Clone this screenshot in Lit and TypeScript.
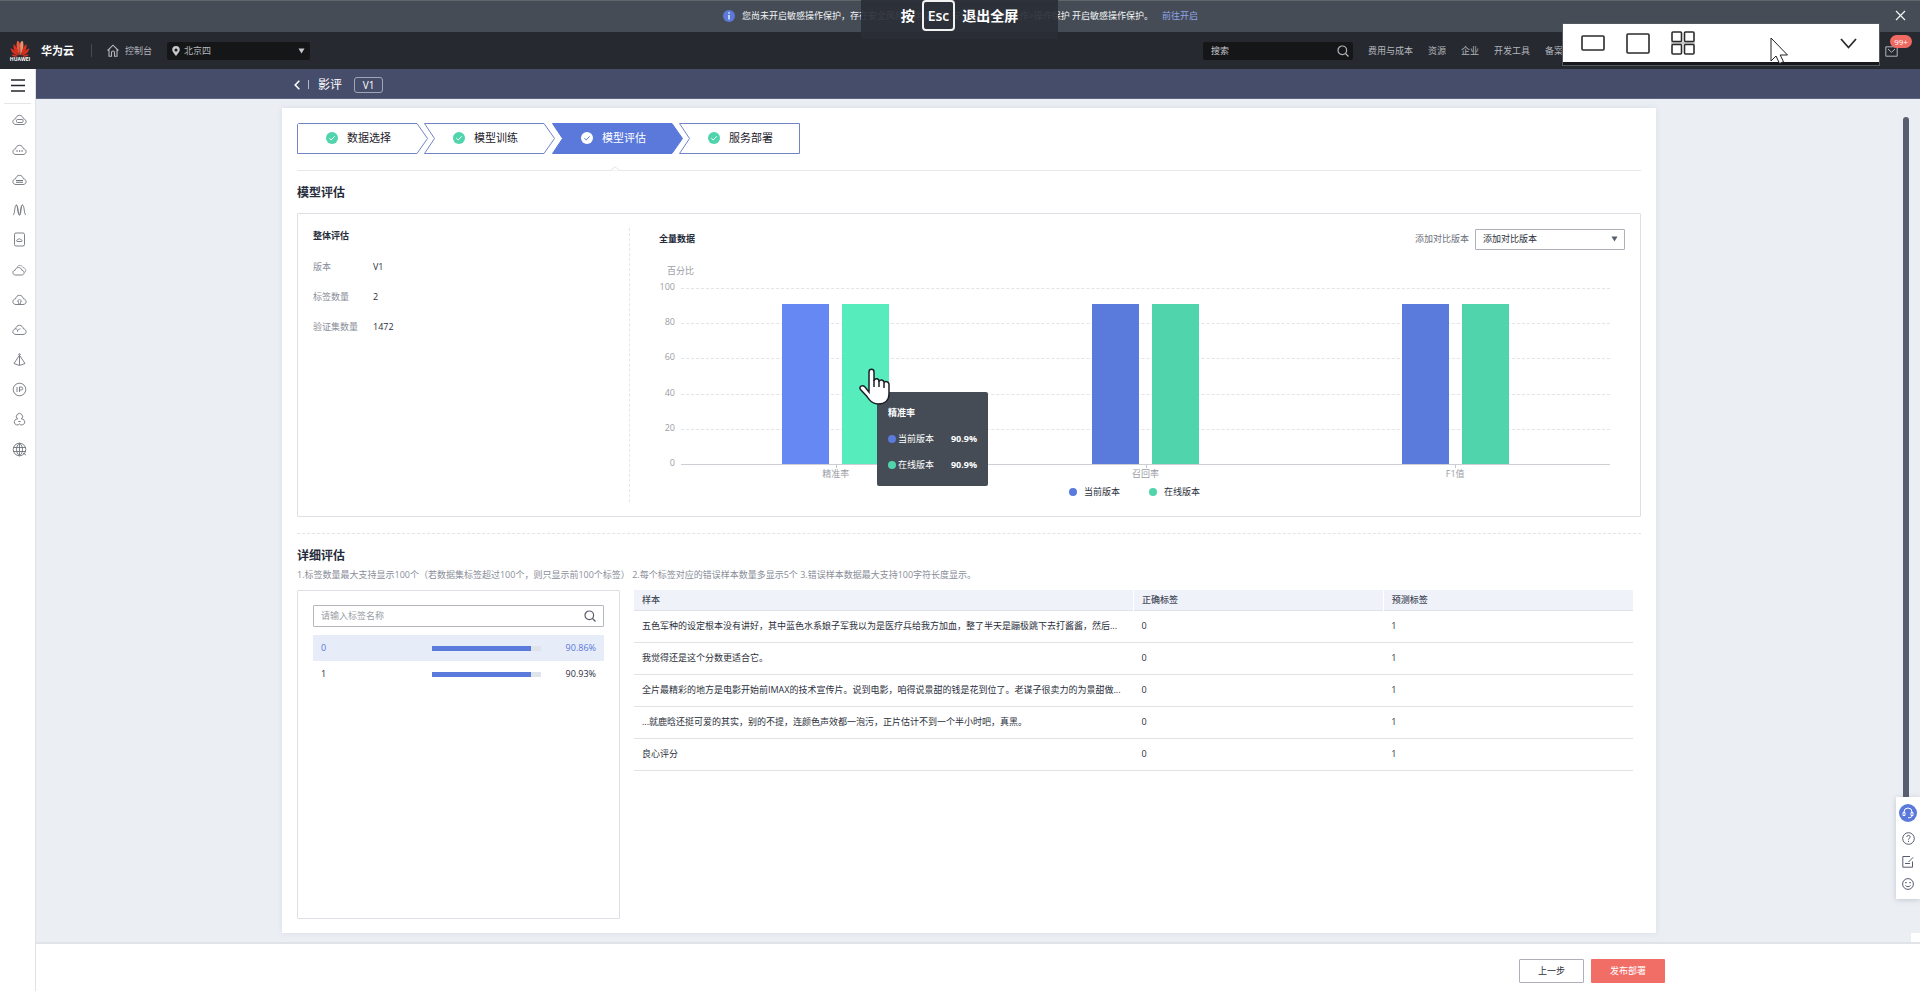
import { LitElement, html, css, svg } from "lit";
import { customElement, state } from "lit/decorators.js";
import { classMap } from "lit/directives/class-map.js";

const cloud = svg`<path d="M4 12.500C2.100 12.500.9 11.300.9 9.700c0-1.500 1.100-2.700 2.700-2.900C4 4.700 5.600 3.300 7.500 3.300s3.500 1.400 3.900 3.500c1.600.2 2.700 1.400 2.700 2.900 0 1.600-1.200 2.800-3.100 2.800z"/>`;

const sideIcons = [
  { name: "云服务器", art: svg`${cloud}<rect x="4.500" y="7.500" width="6.500" height="3" rx="1"/>` },
  { name: "云容器", art: svg`${cloud}<path d="M4.500 9h1.200M7 9h1.200M9.500 9h1.200" stroke-width="1.400"/>` },
  { name: "裸金属", art: svg`${cloud}<path d="M4 8.500h7M4 10.300h7" stroke-width="1.100"/>` },
  { name: "弹性伸缩", art: svg`<path d="M1 13C3 13 2.500 3 4.300 3S5.500 13 7.500 13 8.500 3 10.500 3 12 13 14 13M4.300 3c2 0 1.500 10 3.200 10M10.500 3c-2 0-2 10-3 10"/>` },
  { name: "云硬盘", art: svg`<rect x="2.500" y="1" width="10" height="13" rx="1.500"/><path d="M5 9.500c-1-1 0-2 .8-1.800.5-1.300 2.500-1.300 3 0 1 0 1.500 1 .9 1.800z"/>` },
  { name: "对象存储", art: svg`<path d="M3.500 13C1.800 13 .9 12 .9 10.600c0-1.300 1-2.200 2.200-2.300C3.500 6.500 5 5.500 6.500 5.500s3 1 3.400 2.800c1.300.1 2.200 1 2.200 2.300 0 1.400-1 2.400-2.600 2.400z"/><path d="M5 5.200C6 3 9.500 2.500 11 5.500c2.500.5 3.800 2.800 1.800 5" stroke-opacity=".7"/>` },
  { name: "上传", art: svg`${cloud}<path d="M7.500 7 5.300 9.300h1.200v2.500h2V9.300h1.200z" stroke-width=".7"/>` },
  { name: "虚拟私有云", art: svg`${cloud}<path d="M3.500 6.800c2 .3 2.500 1.500 2 3M5.500 8.800C6 7.500 7 7 8.500 6.800" stroke-width=".8"/>` },
  { name: "负载均衡", art: svg`<path d="M7.500 3v10M7 4 2 11.500 7.500 13.500 13 11.500 8 4"/><circle cx="7.500" cy="2.500" r=".8"/>` },
  { name: "弹性公网", art: svg`<circle cx="7.500" cy="7.500" r="6.300"/><path d="M5 5v5M7.500 10V5h1.700a1.500 1.500 0 0 1 0 3H7.500"/>` },
  { name: "区块链", art: svg`<path d="M5.600 7A3.100 3.100 0 1 1 9.400 7M5.600 7A3 3 0 1 0 7.500 12a3 3 0 1 0 1.900-5M6.300 9.500h2.400"/>` },
  { name: "域名", art: svg`<circle cx="7.500" cy="7.500" r="6.300"/><path d="M1.200 5.500h12.600M1.200 9.500h12.600M7.500 1.200v12.600M7.500 1.200c-4 3-4 9.600 0 12.600M7.500 1.200c4 3 4 9.600 0 12.600M11 11l3 2"/>` },
];

const steps = ["数据选择", "模型训练", "模型评估", "服务部署"];
const metrics = [
  { name: "精准率", current: 90.9, online: 90.9 },
  { name: "召回率", current: 90.9, online: 90.9 },
  { name: "F1值", current: 90.9, online: 90.9 },
];
const labels = [
  { name: "0", score: 90.86 },
  { name: "1", score: 90.93 },
];
const samples = [
  "五色军种的设定根本没有讲好，其中蓝色水系娘子军我以为是医疗兵给我方加血，整了半天是蹦极跳下去打酱酱，然后...",
  "我觉得还是这个分数更适合它。",
  "全片最精彩的地方是电影开始前IMAX的技术宣传片。说到电影，咱得说景甜的钱是花到位了。老谋子很卖力的为景甜做...",
  "...就鹿晗还挺可爱的其实，别的不提，连颜色声效都一泡污，正片估计不到一个半小时吧，真黑。",
  "良心评分",
];

@customElement("app-root")
export class AppRoot extends LitElement {
  @state() private selected = "0";
  @state() private hovered = 0;

  static styles = css`
    :host {
      display: flex;
      flex-direction: column;
      min-height: 100vh;
      position: relative;
      font: 9px/14px "Open Sans", "Noto Sans CJK SC", sans-serif;
      color: #2b303b;
      background: #ebeef3;
    }
    * { box-sizing: border-box; }
    button, input, select { font: inherit; color: inherit; margin: 0; padding: 0; border: 0; background: none; border-radius: 0; outline: 0; }
    button { cursor: pointer; }
    a { color: inherit; text-decoration: none; }
    svg { display: block; fill: none; stroke: currentColor; flex: none; }
    h1, h2, h3, p, ul, ol, dl, dd { margin: 0; padding: 0; list-style: none; }

    .notice { position: relative; display: flex; align-items: center; height: 32px; padding: 0 14px 2px 723px; background: #454c55; border-top: 1px solid #62666a; color: #f2f4f6; white-space: nowrap; }
    .notice a { color: #8fa5ec; margin-left: 9px; }
    .notice .info { margin-right: 7px; }
    .notice .close { margin-left: auto; }
    .esc { position: absolute; left: 861px; top: -1px; width: 197px; height: 39px; display: flex; align-items: flex-start; justify-content: center; gap: 7px; background: rgba(42, 46, 54, 0.92); color: #fff; font-size: 14px; line-height: 31px; font-weight: 600; z-index: 2; }
    .esc kbd { font: inherit; line-height: 27px; padding: 0 4px; border: 2px solid #f2f2f2; border-radius: 4px; }

    .header { display: flex; align-items: center; height: 37px; padding: 0 7px 0 10px; background: #262930; color: #b3b6bb; }
    .logo { display: flex; flex-direction: column; align-items: center; width: 20px; color: #fff; font-size: 5px; line-height: 5px; font-weight: 700; }
    .brand { margin-left: 11px; font-size: 11px; font-weight: 700; color: #fff; }
    .bar { width: 1px; height: 13px; background: #474b52; margin: 0 15px 0 17px; }
    .console { display: flex; align-items: center; gap: 6px; }
    .region { display: flex; align-items: center; gap: 4px; width: 143px; height: 18px; margin-left: 15px; padding: 0 5px; background: #151618; border-radius: 2px; }
    .region select { appearance: none; flex: 1; }
    .find { display: flex; align-items: center; width: 150px; height: 18px; margin-left: auto; padding: 0 4px 0 8px; background: #151618; border-radius: 2px; }
    .find input { flex: 1; min-width: 0; }
    .find input::placeholder { color: #c6c8cc; }
    .links { display: flex; gap: 15px; width: 517px; margin-left: 15px; white-space: nowrap; overflow: hidden; }
    .mail { position: relative; margin: 2px 0 0; padding-right: 15px; }
    .badge { position: absolute; left: 5px; top: -11px; width: 22px; height: 13px; border-radius: 7px; background: #ee6a62; color: #fff; font-size: 8px; line-height: 13px; text-align: center; }

    .viewer { position: absolute; right: 40px; top: 23px; width: 318px; height: 43px; padding: 0 22px 3px 18px; display: flex; align-items: center; gap: 21px; background: #fff; border: 1px solid #55585c; box-shadow: inset 0 -3px #17191c; color: #2b2b2b; z-index: 3; }
    .viewer .more { margin-left: auto; }
    .arrow { position: absolute; left: 1770px; top: 37px; z-index: 4; }

    .frame { display: flex; flex: 1; }
    .side { width: 36px; background: #fff; border-right: 1px solid #dfe2e6; display: flex; flex-direction: column; align-items: center; color: #6f747c; }
    .side .menu { height: 35px; width: 27px; padding-bottom: 2px; border-bottom: 1px solid #e4e6e9; color: #23262c; display: grid; place-items: center; }
    .side ul { display: flex; flex-direction: column; gap: 15px; padding-top: 8px; }
    .side li { height: 15px; padding-left: 3px; }
    .side li a { display: block; }
    .main { flex: 1; min-width: 0; display: flex; flex-direction: column; }
    .title { height: 30px; background: #464d6b; border-bottom: 1px solid #5d6380; color: #fff; display: flex; align-items: center; padding: 2px 0 0 258px; }
    .title i { width: 1px; height: 9px; margin: 0 9px 0 8px; background: #b4b8c8; }
    .title h1 { font-size: 12px; font-weight: 400; line-height: 16px; }
    .title .ver { margin-left: 12px; width: 29px; height: 16px; border: 1px solid #a0a5b8; border-radius: 3px; font-size: 10px; line-height: 14px; text-align: center; }

    .content { flex: 1; display: flex; position: relative; padding: 9px 18px 9px 0; }
    .card { flex: 1; max-width: 1374px; margin: 0 auto; padding: 15px 15px 14px; background: #fff; box-shadow: 0 0 5px rgba(190, 200, 225, 0.45); display: flex; flex-direction: column; }
    .thumb { position: absolute; right: 11px; top: 18px; bottom: 100px; width: 6px; border-radius: 3px; background: #5a5f6f; }
    .corner { position: absolute; right: 0; bottom: 0; width: 9px; height: 9px; background: #fff; }

    .steps { display: flex; gap: 0; }
    .steps li { position: relative; width: 131px; height: 31px; margin-right: -4px; padding: 0 0 2px 29px; display: flex; align-items: center; gap: 9px; font-size: 11px; color: #1e222a; }
    .steps li:nth-child(even) { width: 132px; }
    .steps li > * { position: relative; }
    .steps li .shape { position: absolute; inset: 0; stroke: #7084c6; fill: #fff; }
    .steps .active { color: #fff; }
    .steps .active .shape { fill: #5a79db; stroke: #5a79db; }
    .steps .tick circle { fill: #50d4ab; stroke: none; }
    .steps .tick { color: #fff; }
    .steps .active .tick circle { fill: #fff; }
    .steps .active .tick { color: #5a79db; }

    .rule { margin-top: 16px; height: 1px; background: #e6e8eb; padding-left: 312px; }
    .rule svg { position: relative; top: -4px; }
    h2 { margin: 12px 0 0; font-size: 12px; line-height: 20px; font-weight: 600; color: #252b3a; }
    .box { border: 1px solid #dcdfe3; border-radius: 1px; }
    .overall { display: flex; margin-top: 10px; padding: 14px 15px; }
    .summary { width: 317px; padding-top: 1px; border-right: 1px dashed #e4e6e9; }
    h3 { font-size: 9px; line-height: 14px; font-weight: 700; color: #252b3a; }
    .summary dl { display: grid; grid-template-columns: 60px 1fr; row-gap: 16px; margin-top: 17px; }
    dt, .note { color: #8a8e99; }
    .report { flex: 1; min-width: 0; padding: 0 0 3px 29px; }
    .top { display: flex; align-items: center; height: 22px; }
    .top label { margin-left: auto; margin-right: 6px; color: #6c707a; }
    .pick { display: flex; align-items: center; width: 150px; height: 21px; padding: 0 6px 0 7px; border: 1px solid #adb0b8; border-radius: 1px; }
    .pick select { appearance: none; flex: 1; }
    .unit { margin: 14px 0 0 8px; color: #9a9da5; }
    .chart { display: grid; grid-template-columns: 16px 1fr; column-gap: 6px; margin: 2px 15px 0 0; }
    .scale { display: flex; flex-direction: column; justify-content: space-between; height: 190px; color: #9a9da5; text-align: right; }
    .plot { position: relative; margin-top: 8px; display: grid; height: 177px; }
    .lines, .bands { grid-area: 1 / 1; display: flex; }
    .lines { flex-direction: column; justify-content: space-between; }
    .lines i { border-top: 1px dashed #e2e4e8; }
    .lines i:last-child { border-top: 1px solid #ccd0d4; }
    .bands { position: relative; }
    .band { flex: 1; position: relative; display: flex; justify-content: center; align-items: flex-end; gap: 13px; padding-bottom: 1px; }
    .col { width: 47px; }
    .current { background: #5a7adc; }
    .online { background: #50d4ab; }
    .hot .current { background: #6588f3; }
    .hot .online { background: #57ecbc; }
    .band::after { content: ""; position: absolute; left: 50%; top: 100%; width: 1px; height: 3px; background: #c0c4c8; }
    .names { grid-column: 2; display: flex; margin-top: -3px; color: #9a9da5; text-align: center; }
    .names span { flex: 1; }
    .legend { display: flex; justify-content: center; gap: 29px; margin: 4px 15px 0 0; }
    .key { display: flex; align-items: center; gap: 7px; }
    .dot { width: 8px; height: 8px; border-radius: 4px; }
    .tip { position: absolute; left: 21.1%; top: 104px; width: 111px; height: 94px; padding: 14px 11px; display: flex; flex-direction: column; gap: 12px; border-radius: 2px; background: #454c56; color: #fff; z-index: 1; }
    .tip div { display: flex; align-items: center; gap: 2px; }
    .tip b { margin-left: auto; }
    .hand { position: absolute; left: 19.2%; top: 80px; z-index: 2; }

    .cut { margin-top: 16px; border-top: 1px dashed #e2e4e8; }
    .note { margin-top: 2px; }
    .detail { flex: 1; display: flex; gap: 14px; margin-top: 8px; padding-right: 8px; }
    .tags { width: 323px; padding: 14px 15px; }
    .filter { display: flex; align-items: center; height: 22px; margin-bottom: 8px; padding: 0 7px; border: 1px solid #b4b7be; border-radius: 1px; color: #575d6c; }
    .filter input { flex: 1; min-width: 0; }
    .filter input::placeholder { color: #9a9da5; }
    .tag { display: grid; grid-template-columns: 111px 109px 1fr; align-items: center; width: 100%; height: 26px; padding: 0 8px; text-align: left; }
    .tag.on { background: #e6ecf8; color: #5a79db; }
    .track { height: 5px; background: #dfe3ea; }
    .fill { display: block; height: 5px; background: #5a7adc; }
    .pct { text-align: right; }
    table { flex: 1; align-self: flex-start; table-layout: fixed; border-collapse: collapse; min-width: 0; width: 100px; }
    th { height: 20px; padding: 0 8px; text-align: left; font-weight: 500; background: #f0f2f9; color: #464c59; width: 25%; }
    th:first-child { width: 50%; }
    th + th { border-left: 1px solid #fff; }
    td { height: 32px; padding: 0 8px; border-bottom: 1px solid #dfe3e6; white-space: nowrap; overflow: hidden; }
    thead tr { border-bottom: 1px solid #dfe3e6; }

    .foot { display: flex; align-items: flex-start; justify-content: flex-end; gap: 7px; height: 49px; padding: 15px 255px 0 0; background: #fff; border-top: 2px solid #e0e3e7; }
    .foot button { height: 24px; border-radius: 1px; }
    .prev { width: 65px; border: 1px solid #adb0b8; }
    .go { width: 74px; background: #f16e67; color: #fff; }

    .float { position: absolute; right: 0; bottom: 43px; width: 24px; height: 102px; padding-top: 7px; display: flex; flex-direction: column; align-items: center; gap: 10px; background: #fff; box-shadow: 0 1px 5px rgba(100, 110, 130, 0.3); color: #575d6c; }
    .float button { display: block; }
    .float .chat { width: 18px; height: 18px; border-radius: 9px; background: #5a79db; color: #fff; display: grid; place-items: center; }
  `;

  private caret(color: string) {
    return html`<svg width="7" height="6" viewBox="0 0 7 6"><path d="M.5.5h6L3.500 5.500z" fill=${color} stroke="none" /></svg>`;
  }

  private lens(size: number) {
    return html`<svg width=${size} height=${size} viewBox="0 0 12 12" stroke-width="1.200"><circle cx="5.300" cy="5.300" r="4.300" /><path d="m8.500 8.500 3 3" /></svg>`;
  }

  private step(name: string, i: number) {
    const points = i === 0 ? "1.500,.5 120,.5 130.500,15.500 120,30.500 .5,30.500 .5,1.500"
      : i === steps.length - 1 ? ".5,.5 120.500,.5 120.500,30.500 .5,30.500 10.500,15.500"
      : ".5,.5 120,.5 130.500,15.500 120,30.500 .5,30.500 10.500,15.500";
    return html`<li class=${classMap({ active: i === 2 })}>
      <svg class="shape" width="131" height="31"><polygon points=${points} /></svg>
      <svg class="tick" width="12" height="12" viewBox="0 0 12 12"><circle cx="6" cy="6" r="6" /><path d="m3.300 6.200 1.900 1.800 3.500-3.700" /></svg>
      <span>${name}</span>
    </li>`;
  }

  render() {
    return html`
      <div class="notice">
        <svg class="info" width="12" height="12" viewBox="0 0 12 12"><circle cx="6" cy="6" r="6" fill="#5a79db" stroke="none" /><path d="M6 5v4.500M6 2.300v1.500" stroke="#fff" stroke-width="1.300" /></svg>
        <span>您尚未开启敏感操作保护，存在安全风险，建议您去 安全设置&gt;敏感操作&gt;操作保护 开启敏感操作保护。</span>
        <a href="#protect">前往开启</a>
        <button class="close" aria-label="关闭"><svg width="11" height="11" viewBox="0 0 11 11"><path d="m1 1 9 9M10 1l-9 9" stroke-width="1.200" /></svg></button>
        <div class="esc"><span>按</span><kbd>Esc</kbd><span>退出全屏</span></div>
      </div>

      <header class="header">
        <div class="logo">
          <svg width="20" height="17" viewBox="0 0 20 17">
            <g fill="#d9301f" stroke="none">
              <path d="M9.600 15.500C7.500 11 5.500 6 7.200 1.300 9 .3 10 3 9.900 6z" fill="#ea5a40" />
              <path d="M10.400 15.500C12.500 11 14.500 6 12.800 1.300 11 .3 10 3 10.100 6z" fill="#f0916a" />
              <path d="M9 15.500C5.500 12.500 2.500 8.500 3.600 4.200 6 5 8 10 9 15.500zM11 15.500c3.500-3 6.500-7 5.400-11.300C14 5 12 10 11 15.500z" />
              <path d="M8.200 15.800C4 14.500 1 12 .6 8.300 3.500 9 6.500 12 8.200 15.800zM11.800 15.800c4.200-1.300 7.200-3.800 7.600-7.500-2.900.7-5.900 3.700-7.600 7.500z" />
              <path d="M7.800 16.500c-2.500.4-5 .2-6.300-1.800 2-.8 4.500 0 6.300 1.800zM12.200 16.500c2.500.4 5 .2 6.300-1.800-2-.8-4.500 0-6.300 1.800z" />
            </g>
          </svg>
          <span>HUAWEI</span>
        </div>
        <span class="brand">华为云</span>
        <span class="bar"></span>
        <a class="console" href="#console">
          <svg width="12" height="13" viewBox="0 0 12 13"><path d="M.6 6.500 6 1.200l5.400 5.300M2 5.500v6.700h2.500V8.500a1.500 1.500 0 0 1 3 0v3.700H10V5.500" stroke-width="1.100" /></svg>控制台</a>
        <div class="region">
          <svg width="8" height="10" viewBox="0 0 8 10"><path fill-rule="evenodd" d="M4 0a3.800 3.800 0 0 1 3.800 3.800C7.800 6 5 8.500 4 10 3 8.500.2 6 .2 3.800A3.800 3.800 0 0 1 4 0zm0 2.400a1.500 1.500 0 1 0 0 3 1.500 1.500 0 0 0 0-3z" fill="#c6c8cc" stroke="none" /></svg>
          <select aria-label="区域"><option>北京四</option></select>${this.caret("#c6c8cc")}
        </div>
        <div class="find"><input aria-label="搜索" placeholder="搜索" />${this.lens(12)}</div>
        <nav class="links">
          ${["费用与成本", "资源", "企业", "开发工具", "备案"].map((t) => html`<a href="#nav">${t}</a>`)}
        </nav>
        <a class="mail" href="#mail" aria-label="消息">
          <svg width="13" height="11" viewBox="0 0 13 11"><path d="M.8.8h11.400v9.400H.8zM3 3l3.500 3.300L10 3" /></svg>
          <span class="badge">99+</span>
        </a>
      </header>

      <div class="viewer">
        <button aria-label="宽屏"><svg width="24" height="16" stroke-width="1.600"><rect x="1" y="1" width="22" height="14" rx="1" /></svg></button>
        <button aria-label="单页"><svg width="24" height="21" stroke-width="1.600"><rect x="1" y="1" width="22" height="19" rx="1" /></svg></button>
        <button aria-label="网格"><svg width="24" height="24" stroke-width="1.600"><path d="M0 12h24" stroke="#c4c4c4" stroke-width="3" /><g fill="#fff"><rect x="1" y="1" width="9.500" height="9.500" rx="1" /><rect x="13.500" y="1" width="9.500" height="9.500" rx="1" /><rect x="1" y="13.500" width="9.500" height="9.500" rx="1" /><rect x="13.500" y="13.500" width="9.500" height="9.500" rx="1" /></g></svg></button>
        <button class="more" aria-label="展开"><svg width="17" height="11" stroke-width="1.800"><path d="m1 1 7.500 8.500L16 1" /></svg></button>
      </div>
      <svg class="arrow" width="19" height="28" viewBox="0 0 19 28"><path d="M1 1v23l5-5 3.500 7.500 4-1.800L10.200 18H17.500z" fill="#fff" stroke="#222" /></svg>

      <div class="frame">
        <aside class="side">
          <button class="menu" aria-label="菜单"><svg width="14" height="13"><path d="M0 1h14M0 6.500h14M0 12h14" stroke-width="1.700" /></svg></button>
          <ul>${sideIcons.map((s) => html`<li><a href="#service" aria-label=${s.name}><svg width="15" height="15" viewBox="0 0 15 15" stroke-width=".9">${s.art}</svg></a></li>`)}</ul>
        </aside>

        <div class="main">
          <div class="title">
            <button aria-label="返回"><svg width="6" height="10" viewBox="0 0 6 10"><path d="M5.300.7 1.200 5l4.100 4.300" stroke-width="1.600" /></svg></button>
            <i></i><h1>影评</h1><span class="ver">V1</span>
          </div>

          <div class="content">
            <main class="card">
              <ol class="steps">${steps.map((s, i) => this.step(s, i))}</ol>
              <div class="rule"><svg width="12" height="6" viewBox="0 0 12 6"><path d="M1.500 4.500 6 .8l4.500 3.700" fill="#fff" stroke="#e0e3e6" /></svg></div>

              <h2>模型评估</h2>
              <section class="box overall">
                <div class="summary">
                  <h3>整体评估</h3>
                  <dl><dt>版本</dt><dd>V1</dd><dt>标签数量</dt><dd>2</dd><dt>验证集数量</dt><dd>1472</dd></dl>
                </div>
                <div class="report">
                  <div class="top">
                    <h3>全量数据</h3>
                    <label for="compare">添加对比版本</label>
                    <span class="pick"><select id="compare"><option>添加对比版本</option></select>${this.caret("#575d6c")}</span>
                  </div>
                  <div class="unit">百分比</div>
                  <div class="chart">
                    <div class="scale">${[100, 80, 60, 40, 20, 0].map((n) => html`<span>${n}</span>`)}</div>
                    <div class="plot">
                      <div class="lines"><i></i><i></i><i></i><i></i><i></i><i></i></div>
                      <div class="bands">
                        ${metrics.map((m, i) => html`<div class=${classMap({ band: true, hot: this.hovered === i })}>
                          <div class="col current" style="height:${m.current}%"></div>
                          <div class="col online" style="height:${m.online}%"></div>
                        </div>`)}
                      </div>
                      <div class="tip">
                        <strong>${metrics[this.hovered].name}</strong>
                        <div><span class="dot current"></span>当前版本<b>${metrics[this.hovered].current}%</b></div>
                        <div><span class="dot online"></span>在线版本<b>${metrics[this.hovered].online}%</b></div>
                      </div>
                      <svg class="hand" width="32" height="37" viewBox="0 0 32 37"><path d="M10 24V4c0-3.600 5-3.600 5 0v9c.5-3 5-3 5 .6.8-2.400 5-2.200 5 1.200 1-2 5-1.600 5 1.600V26c0 6-4 10-11 10-6 0-8.500-4-11-7.500L1.500 21.500C-.5 18.500 3.500 16.500 6 19z" fill="#fff" stroke="#1d2026" stroke-width="1.500" /><path d="M15 12v7M20 13v6M25 15v5" stroke="#1d2026" stroke-width="1.500" /></svg>
                    </div>
                    <div class="names">${metrics.map((m) => html`<span>${m.name}</span>`)}</div>
                  </div>
                  <div class="legend">
                    <span class="key"><span class="dot current"></span>当前版本</span>
                    <span class="key"><span class="dot online"></span>在线版本</span>
                  </div>
                </div>
              </section>

              <div class="cut"></div>
              <h2>详细评估</h2>
              <p class="note">1.标签数量最大支持显示100个（若数据集标签超过100个，则只显示前100个标签） 2.每个标签对应的错误样本数量多显示5个 3.错误样本数据最大支持100字符长度显示。</p>
              <section class="detail">
                <div class="box tags">
                  <div class="filter"><input aria-label="标签名称" placeholder="请输入标签名称" />${this.lens(12)}</div>
                  ${labels.map((l) => html`<button class=${classMap({ tag: true, on: this.selected === l.name })} @click=${() => (this.selected = l.name)}>
                    <span>${l.name}</span>
                    <span class="track"><span class="fill" style="width:${l.score}%"></span></span>
                    <span class="pct">${l.score}%</span>
                  </button>`)}
                </div>
                <table>
                  <thead><tr><th>样本</th><th>正确标签</th><th>预测标签</th></tr></thead>
                  <tbody>${samples.map((s) => html`<tr><td>${s}</td><td>0</td><td>1</td></tr>`)}</tbody>
                </table>
              </section>
            </main>
            <div class="thumb"></div>
            <div class="corner"></div>
            <div class="float">
              <button class="chat" aria-label="客服"><svg width="12" height="12" viewBox="0 0 12 12"><path d="M2 6V5a4 4 0 0 1 8 0v1M1 5.500h2V8.500H1zM9 5.500h2V8.500H9zM10 8.500c0 1.800-1.500 2.300-4 2.300" /></svg></button>
              <button aria-label="帮助"><svg width="13" height="13" viewBox="0 0 13 13"><circle cx="6.500" cy="6.500" r="5.800" /><path d="M4.800 5c.1-2.200 3.500-2.100 3.400 0 0 1.200-1.700 1.300-1.700 2.700M6.500 8.800v1.100" /></svg></button>
              <button aria-label="反馈"><svg width="12" height="13" viewBox="0 0 12 13"><path d="M8 1.500H.8v10.700h9.700V6.500M6.500 7l4.700-4.700M3 8.500h5" /></svg></button>
              <button aria-label="评价"><svg width="12" height="12" viewBox="0 0 12 12"><circle cx="6" cy="6" r="5.400" /><path d="M3 4.700h1.800M7.200 4.700H9M3.500 7.500c1.200 1.600 3.800 1.600 5 0" /></svg></button>
            </div>
          </div>

          <footer class="foot">
            <button class="prev">上一步</button>
            <button class="go">发布部署</button>
          </footer>
        </div>
      </div>
    `;
  }
}
